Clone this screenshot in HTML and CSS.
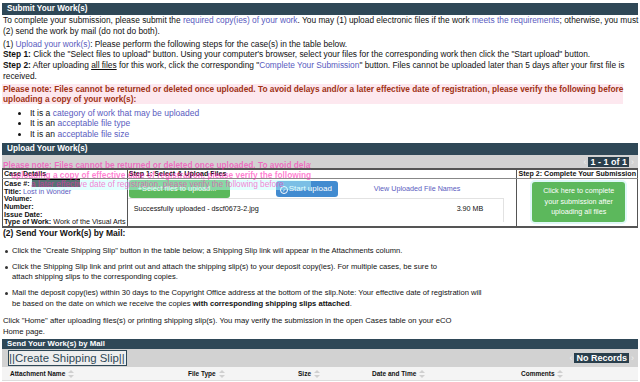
FILE: index.html
```html
<!DOCTYPE html>
<html lang="en">
<head>
<meta charset="UTF-8">
<meta name="viewport" content="width=device-width, initial-scale=1.0">
<title>Submit Your Work(s)</title>
<link rel="stylesheet" href="styles.css">
</head>
<body>
<div class="page">
    <div class="bar">Submit Your Work(s)</div>
    <p class="text">To complete your submission, please submit the <a href="#">required copy(ies) of your work</a>. You may (1) upload electronic files if the work <a href="#">meets the requirements</a>; otherwise, you must<br>(2) send the work by mail (do not do both).</p>
    <p class="text steps">(1) <a href="#">Upload your work(s)</a>: Please perform the following steps for the case(s) in the table below.<br>
        <b>Step 1:</b> Click the "Select files to upload" button. Using your computer's browser, select your files for the corresponding work then click the "Start upload" button.<br>
        <b>Step 2:</b> After uploading <u>all files</u> for this work, click the corresponding "<a href="#">Complete Your Submission</a>" button. Files cannot be uploaded later than 5 days after your first file is<br>received.</p>
    <div class="note">Please note: Files cannot be returned or deleted once uploaded. To avoid delays and/or a later effective date of registration, please verify the following before<br>uploading a copy of your work(s):</div>
    <ul class="checks">
        <li>It is a <a href="#">category of work that may be uploaded</a></li>
        <li>It is an <a href="#">acceptable file type</a></li>
        <li>It is an <a href="#">acceptable file size</a></li>
    </ul>

    <div class="bar">Upload Your Work(s)</div>
    <div class="toolbar">
        <span class="arrow">&#8249;</span><span class="pager">1 - 1 of 1</span><span class="arrow">&#8250;</span>
    </div>
    <table class="cases">
        <tr>
            <th class="col-case">Case Details</th>
            <th class="col-step1">Step 1: Select &amp; Upload Files</th>
            <th class="col-step2">Step 2: Complete Your Submission</th>
        </tr>
        <tr>
            <td class="case-info">
                <b>Case #:</b> <span class="redact"></span><br>
                <b>Title:</b> <a href="#">Lost in Wonder</a><br>
                <b>Volume:</b><br>
                <b>Number:</b><br>
                <b>Issue Date:</b><br>
                <b>Type of Work:</b> Work of the Visual Arts
            </td>
            <td class="upload">
                <div class="upload-actions">
                    <span class="btn btn-green">+Select files to upload...</span>
                    <span class="btn btn-blue"><span class="circle">&#10003;</span>Start upload</span>
                    <a class="view-link" href="#">View Uploaded File Names</a>
                </div>
                <div class="file-row">
                    <span>Successfully uploaded - dscf0673-2.jpg</span>
                    <span>3.90 MB</span>
                </div>
            </td>
            <td class="complete">
                <span class="btn-complete">Click here to complete<br>your submission after<br>uploading all files</span>
            </td>
        </tr>
    </table>

    <div class="ghost">
        <div>Please note: Files cannot be returned or deleted once uploaded. To avoid delays</div>
        <div class="ghost-2">uploading a copy of effective date of registration, please verify the following before</div>
        <div class="ghost-3">a later effective date of registration, please verify the following before</div>
    </div>

    <p class="mail-title">(2) Send Your Work(s) by Mail:</p>
    <ul class="mail-steps">
        <li>Click the "Create Shipping Slip" button in the table below; a Shipping Slip link will appear in the Attachments column.</li>
        <li>Click the Shipping Slip link and print out and attach the shipping slip(s) to your deposit copy(ies). For multiple cases, be sure to<br>attach shipping slips to the corresponding copies.</li>
        <li>Mail the deposit copy(ies) within 30 days to the Copyright Office address at the bottom of the slip.Note: Your effective date of registration will<br>be based on the date on which we receive the copies <b>with corresponding shipping slips attached</b>.</li>
    </ul>
    <p class="text home">Click "Home" after uploading files(s) or printing shipping slip(s). You may verify the submission in the open Cases table on your eCO<br>Home page.</p>

    <div class="bar bar-small">Send Your Work(s) by Mail</div>
    <div class="toolbar toolbar-mail">
        <span class="slip-btn">||Create Shipping Slip||</span>
        <span class="spacer"></span>
        <span class="arrow">&#8249;</span><span class="pager">No Records</span><span class="arrow">&#8250;</span>
    </div>
    <div class="columns">
        <span class="c-name">Attachment Name <i class="sort"></i></span>
        <span class="c-type">File Type <i class="sort"></i></span>
        <span class="c-size">Size <i class="sort"></i></span>
        <span class="c-date">Date and Time <i class="sort"></i></span>
        <span class="c-comm">Comments <i class="sort"></i></span>
    </div>
</div>
</body>
</html>
```

FILE: styles.css
```css
/* Global styles */
body {
    font-family: "Liberation Sans", Arial, sans-serif;
    font-size: 8.35px;
    margin: 0;
    padding: 0;
    background-color: #fff;
    color: #111;
}
a {
    color: #5a5cc0;
    text-decoration: none;
}
.page {
    position: relative;
    padding: 3px 2px 0 2px;
}
.bar {
    background-color: #2f4857;
    color: #fff;
    font-weight: bold;
    font-size: 8.2px;
    line-height: 12px;
    padding-left: 5px;
}
.text {
    margin: 0 0 0 1px;
    line-height: 10.8px;
    white-space: nowrap;
}
.steps {
    margin-top: 2px;
}
.note {
    margin: 2px 15px 0 0;
    background-color: #fde8ef;
    color: #a03214;
    font-weight: bold;
    font-size: 8.3px;
    line-height: 10px;
    padding-left: 1px;
    white-space: nowrap;
}
.checks {
    margin: 4px 0 4px 0;
    padding-left: 28px;
    font-size: 8.5px;
    line-height: 10.5px;
}
.toolbar {
    display: flex;
    justify-content: flex-end;
    align-items: center;
    background-color: #d2d2d2;
    height: 13px;
    padding-right: 2px;
}
.arrow {
    color: #eee;
    font-size: 9px;
    padding: 0 2px;
}
.pager {
    background-color: #2a3f4c;
    color: #fff;
    font-weight: bold;
    font-size: 9px;
    line-height: 10px;
    padding: 0 2px;
}
.cases {
    width: 100%;
    border-collapse: collapse;
    border-top: 2px solid #555;
    border-bottom: 2px solid #555;
}
.cases th {
    font-size: 7.1px;
    text-align: left;
    line-height: 8px;
    padding: 0 1px;
    border-bottom: 1px solid #888;
    border-left: 1px solid #555;
    border-right: 1px solid #555;
    white-space: nowrap;
}
.col-case { width: 121px; }
.col-step2 { width: 117px; }
.cases td {
    vertical-align: top;
    border-left: 1px solid #555;
    border-right: 1px solid #555;
    padding: 0;
}
.case-info {
    font-size: 7.2px;
    line-height: 7.6px;
    white-space: nowrap;
    padding: 0 1px !important;
}
.redact {
    display: inline-block;
    width: 48px;
    height: 8px;
    background-color: #000;
    vertical-align: -1px;
}
.upload-actions {
    display: flex;
    align-items: center;
    height: 19px;
    border-bottom: 1px solid #e2e2e2;
    margin-right: 12px;
}
.btn {
    color: #fff;
    border-radius: 3px;
    font-size: 7.4px;
    line-height: 18px;
    white-space: nowrap;
}
.btn-green {
    background-color: #5cb85c;
    width: 92px;
    padding: 0 0 0 9px;
    margin-left: 1px;
}
.btn-blue {
    background-color: #428bd0;
    margin-left: 46px;
    padding: 0 6px 0 4px;
    font-size: 8px;
    line-height: 16px;
}
.circle {
    display: inline-block;
    width: 6px;
    height: 6px;
    border: 1px solid #fff;
    border-radius: 50%;
    font-size: 5px;
    line-height: 6px;
    text-align: center;
    vertical-align: -1px;
    margin-right: 1px;
}
.view-link {
    font-size: 7.2px;
    margin-left: 36px;
}
.file-row {
    display: flex;
    justify-content: space-between;
    font-size: 7.2px;
    line-height: 9px;
    padding: 5px 20px 9px 6px;
    margin-right: 12px;
    border-right: 1px solid #e2e2e2;
}
.complete {
    text-align: center;
}
.btn-complete {
    display: block;
    margin: 3px 12px 1px 15px;
    background-color: #5cb85c;
    color: #fff;
    border-radius: 3px;
    box-shadow: 0 0 0 2px #e0f8f8;
    font-size: 7.2px;
    line-height: 10.5px;
    padding: 4px 2px;
}
.ghost {
    position: absolute;
    left: 3px;
    top: 161px;
    width: 308px;
    height: 30px;
    overflow: hidden;
    color: rgba(255, 40, 180, 0.6);
    font-weight: bold;
    font-size: 8.3px;
    line-height: 9.5px;
    white-space: nowrap;
    pointer-events: none;
}
.ghost-2 {
    margin-left: 8px;
}
.ghost-3 {
    margin-left: 28px;
    font-weight: normal;
    background-color: rgba(190, 255, 255, 0.45);
}
.mail-title {
    font-weight: bold;
    font-size: 8.5px;
    line-height: 10px;
    margin: 0 0 0 1px;
}
.mail-steps {
    margin: 8px 0 0 0;
    padding-left: 10px;
    font-size: 7.6px;
    list-style: none;
}
.mail-steps li {
    position: relative;
    margin-bottom: 5.5px;
    line-height: 10.5px;
    white-space: nowrap;
}
.mail-steps li::before {
    content: "";
    position: absolute;
    left: -7px;
    top: 4px;
    width: 3px;
    height: 3px;
    border-radius: 50%;
    background-color: #333;
}
.home {
    font-size: 7.7px;
    line-height: 11px;
    margin-top: 5px;
    margin-bottom: 2px;
}
.bar-small {
    font-size: 7.8px;
    line-height: 10px;
}
.toolbar-mail {
    height: 18px;
}
.spacer {
    flex: 1;
}
.slip-btn {
    margin-left: 6px;
    border: 1px solid #2f4857;
    background-color: #eeeeee;
    color: #2f4857;
    font-size: 11.4px;
    line-height: 14px;
    padding: 0 1px 0 0;
}
.columns {
    display: flex;
    font-size: 6.5px;
    font-weight: bold;
    line-height: 13px;
    background-color: #f4f4f4;
    border-bottom: 1px solid #ddd;
}
.columns span {
    flex: none;
}
.c-name { margin-left: 8px; width: 178px; }
.c-type { width: 110px; }
.c-size { width: 74px; }
.c-date { width: 149px; }
.sort {
    display: inline-block;
    width: 7px;
    height: 8px;
    vertical-align: -2px;
    position: relative;
    margin-left: 1px;
}
.sort::before,
.sort::after {
    content: "";
    position: absolute;
    left: 0;
    border-left: 3.5px solid transparent;
    border-right: 3.5px solid transparent;
}
.sort::before {
    top: 0;
    border-bottom: 3.5px solid #d0d0d0;
}
.sort::after {
    bottom: 0;
    border-top: 3.5px solid #d0d0d0;
}
```
